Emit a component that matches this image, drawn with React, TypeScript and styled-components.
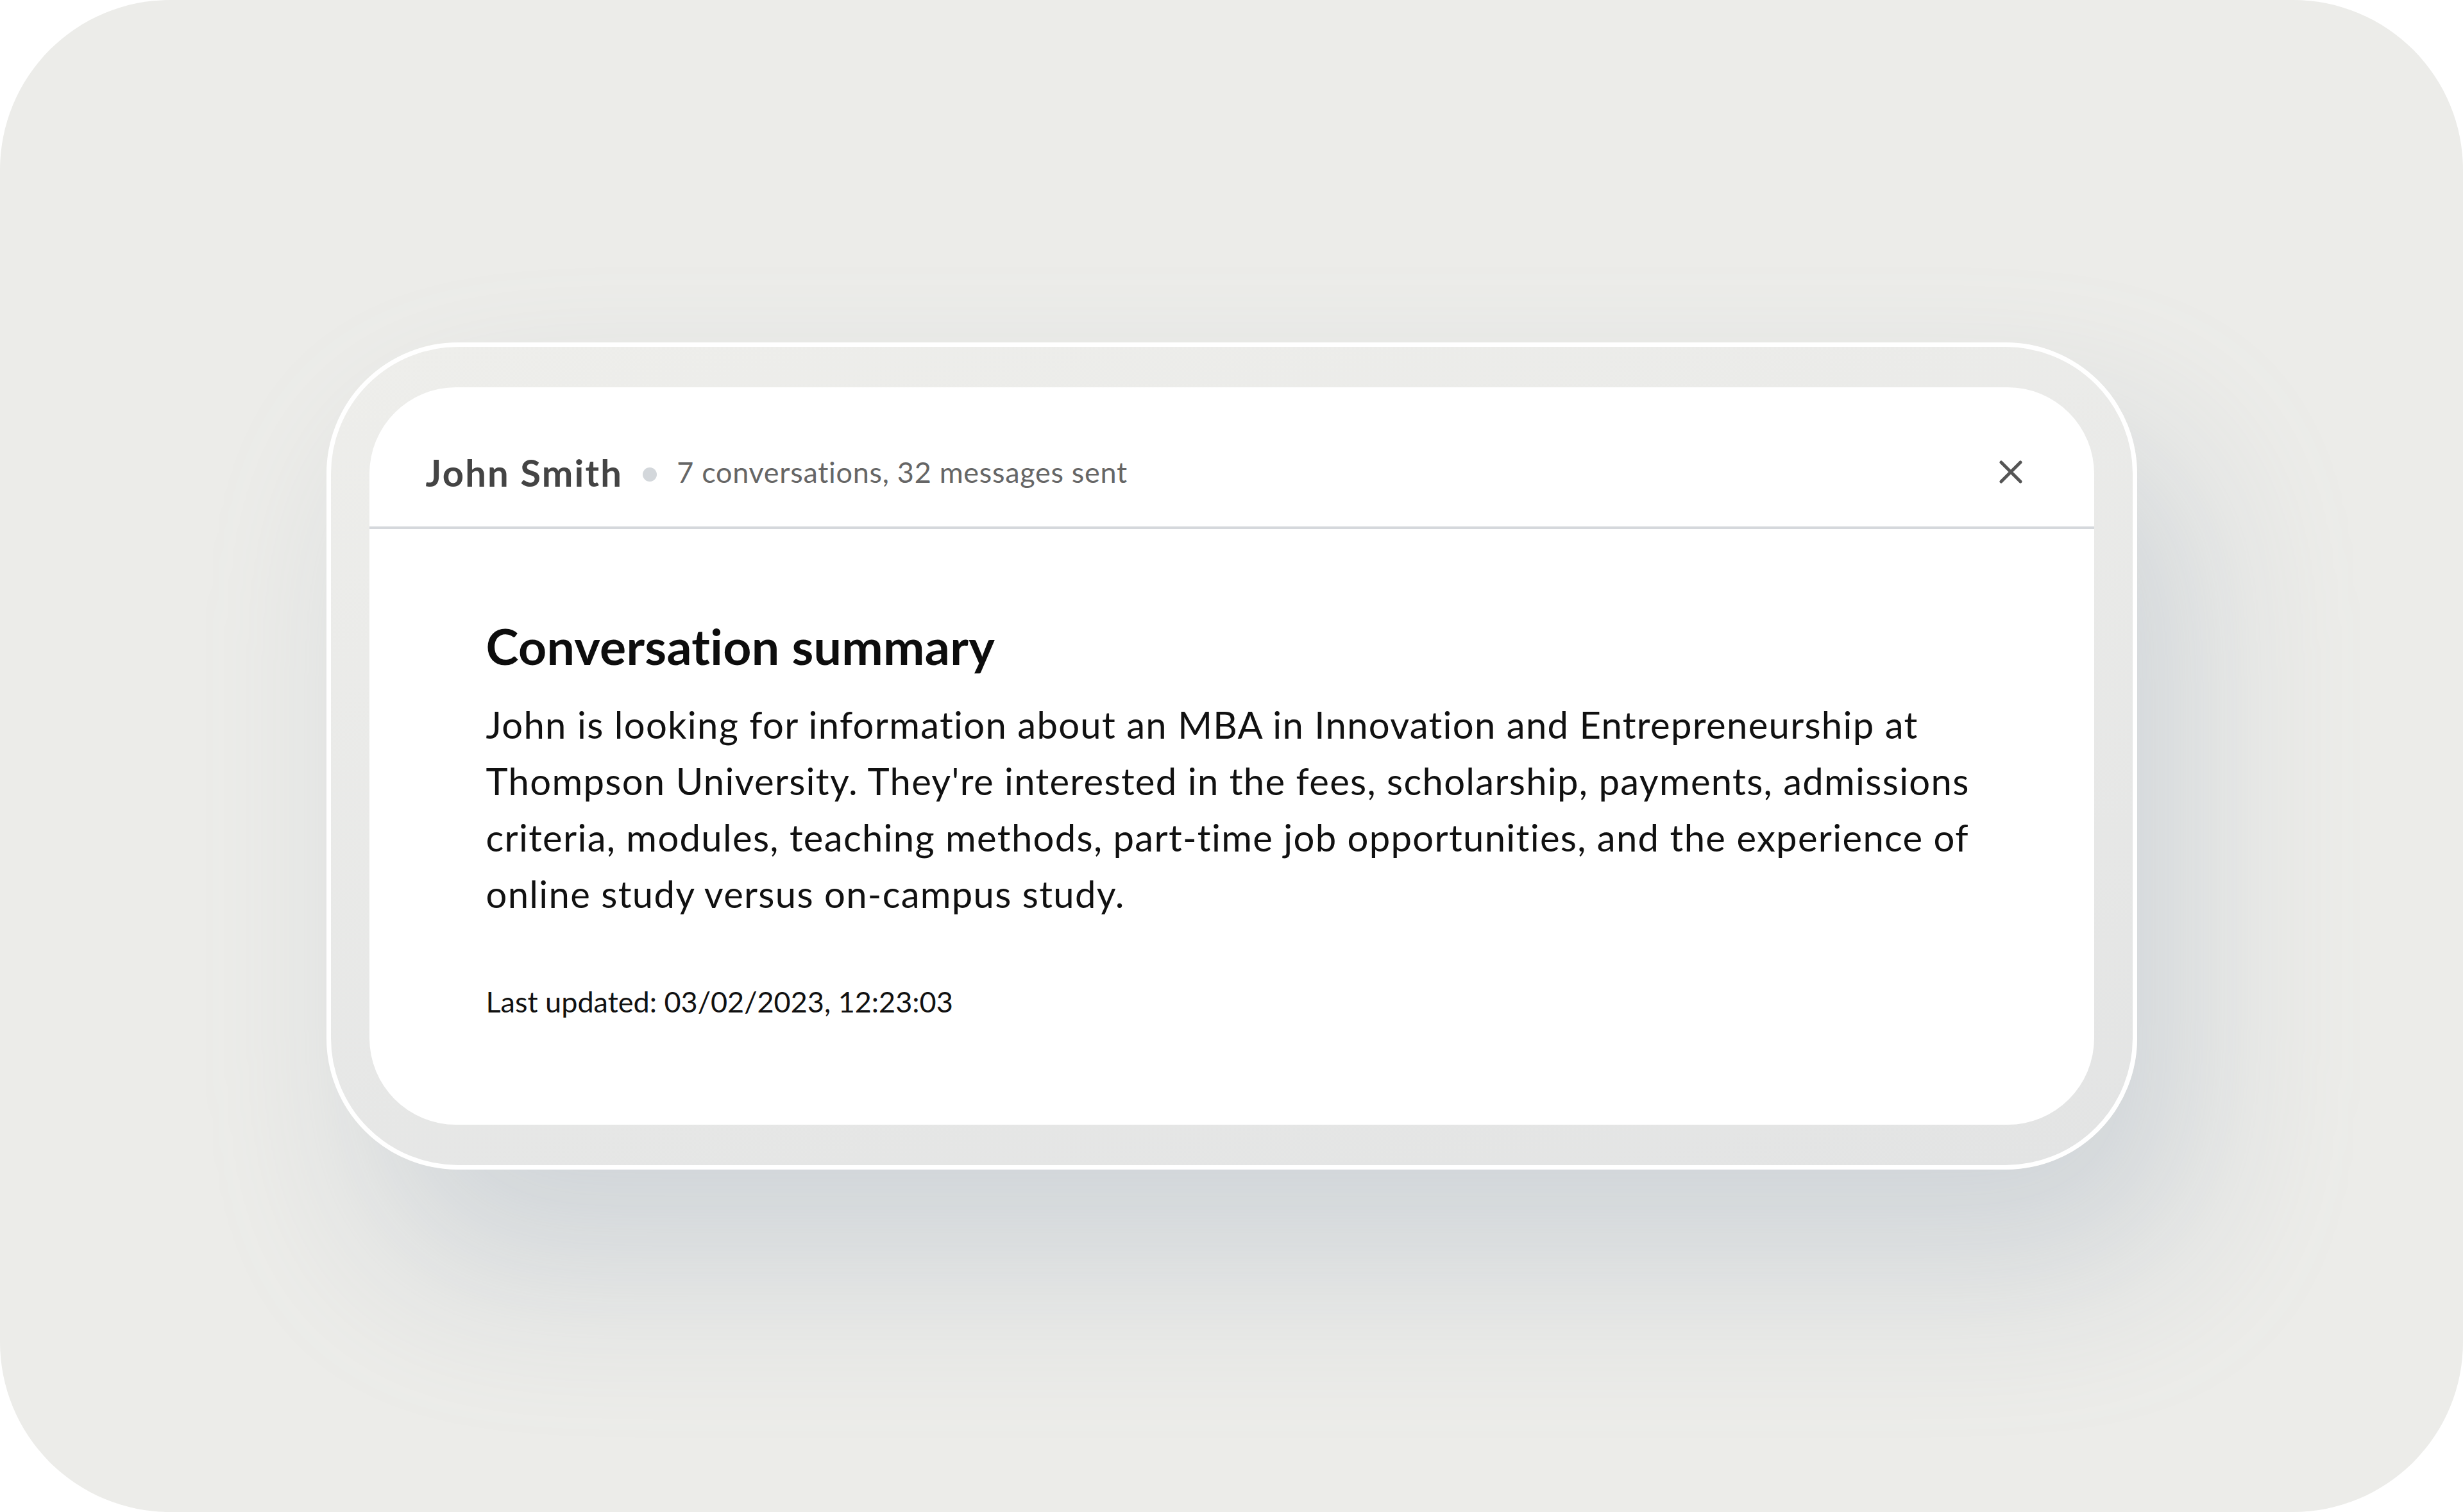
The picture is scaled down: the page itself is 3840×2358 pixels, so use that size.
import React from "react";
import styled, { createGlobalStyle } from "styled-components";

const Global = createGlobalStyle`
  html, body { margin: 0; padding: 0; background: #ffffff; }
  body { font-family: Lato, "Noto Sans", sans-serif; -webkit-font-smoothing: antialiased; }
`;

const Page = styled.div`
  width: 3840px;
  height: 2358px;
  box-sizing: border-box;
  background: #ecece9;
  border-radius: 265px;
  display: flex;
  align-items: center;
  justify-content: center;
  overflow: hidden;
`;

const Frame = styled.div`
  box-sizing: border-box;
  padding: 63px 60px;
  border: 7px solid #ffffff;
  border-radius: 205px;
  background: linear-gradient(170deg, #eeeeeb 0%, #e3e4e4 100%);
  box-shadow: 80px 150px 300px rgba(150, 165, 185, 0.32);
`;

const Card = styled.section`
  width: 2689px;
  background: #ffffff;
  border-radius: 135px;
  overflow: hidden;
`;

const Header = styled.header`
  height: 169px;
  padding: 48px 112px 0 88px;
  display: flex;
  align-items: center;
  border-bottom: 4px solid #d5d8dc;
`;

const Name = styled.span`
  font-size: 58px;
  font-weight: 700;
  letter-spacing: 2.2px;
  line-height: 1.2;
  color: #444444;
`;

const Dot = styled.span`
  width: 22px;
  height: 22px;
  border-radius: 50%;
  background: #d3d7db;
  margin: 7px 31px 0 31px;
  flex: none;
`;

const Meta = styled.span`
  font-size: 45px;
  letter-spacing: 0.7px;
  line-height: 1.2;
  color: #666666;
`;

const CloseButton = styled.button`
  margin-left: auto;
  width: 36px;
  height: 36px;
  padding: 0;
  border: 0;
  background: none;
  display: flex;
  cursor: pointer;
`;

const Body = styled.div`
  padding: 136px 182px 160px;
`;

const Title = styled.h2`
  margin: 0 0 33px;
  font-size: 77px;
  font-weight: 700;
  letter-spacing: 0.3px;
  line-height: 1.2;
  color: #0d0d0d;
`;

const Summary = styled.p`
  margin: 0;
  font-size: 58px;
  letter-spacing: 1.3px;
  line-height: 88px;
  color: #111111;
`;

const Line = styled.span`
  display: block;
  white-space: nowrap;
`;

const Updated = styled.div`
  margin-top: 93px;
  font-size: 45px;
  line-height: 1.4;
  color: #111111;
`;

const lines = [
  "John is looking for information about an MBA in Innovation and Entrepreneurship at",
  "Thompson University. They're interested in the fees, scholarship, payments, admissions",
  "criteria, modules, teaching methods, part-time job opportunities, and the experience of",
  "online study versus on-campus study.",
];

export default function App() {
  return (
    <>
      <Global />
      <Page>
        <Frame>
          <Card>
            <Header>
              <Name>John Smith</Name>
              <Dot />
              <Meta>7 conversations, 32 messages sent</Meta>
              <CloseButton aria-label="Close">
                <svg width="36" height="36" viewBox="0 0 36 36">
                  <path
                    d="M3 3L33 33M33 3L3 33"
                    stroke="#555555"
                    strokeWidth="5"
                    strokeLinecap="round"
                    fill="none"
                  />
                </svg>
              </CloseButton>
            </Header>
            <Body>
              <Title>Conversation summary</Title>
              <Summary>
                {lines.map((l) => (
                  <Line key={l}>{l}</Line>
                ))}
              </Summary>
              <Updated>Last updated: 03/02/2023, 12:23:03</Updated>
            </Body>
          </Card>
        </Frame>
      </Page>
    </>
  );
}
